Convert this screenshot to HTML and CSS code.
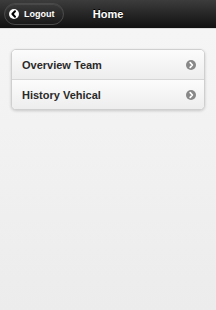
FILE: index.html
```html
<!DOCTYPE html>
<html lang="en">
<head>
    <meta charset="UTF-8">
    <meta name="viewport" content="width=device-width, initial-scale=1.0">
    <title>Home</title>
    <link rel="stylesheet" href="styles.css">
</head>
<body>
    <div class="header">
        <button class="back-button" id="logoutButton">
            <span class="back-icon">
                <svg width="10" height="10" viewBox="0 0 10 10"><path d="M6 2.2 L3.4 5 L6 7.8" fill="none" stroke="#000" stroke-width="2" stroke-linecap="round" stroke-linejoin="round"/></svg>
            </span>
            Logout
        </button>
        <h1>Home</h1>
    </div>
    <div class="content">
        <ul class="menu-list">
            <li class="menu-item">
                <span>Overview Team</span>
                <span class="arrow-icon">
                    <svg width="10" height="10" viewBox="0 0 10 10"><path d="M4.2 2.7 L6.4 5 L4.2 7.3" fill="none" stroke="#fff" stroke-width="1.7" stroke-linecap="round" stroke-linejoin="round"/></svg>
                </span>
            </li>
            <li class="menu-item">
                <span>History Vehical</span>
                <span class="arrow-icon">
                    <svg width="10" height="10" viewBox="0 0 10 10"><path d="M4.2 2.7 L6.4 5 L4.2 7.3" fill="none" stroke="#fff" stroke-width="1.7" stroke-linecap="round" stroke-linejoin="round"/></svg>
                </span>
            </li>
        </ul>
    </div>
</body>
</html>
```

FILE: styles.css
```css
html, body {
    height: 100%;
}
body {
    font-family: "Liberation Sans", Arial, sans-serif;
    background: linear-gradient(#f6f6f6, #ececec);
    margin: 0;
}
.header {
    position: relative;
    height: 28px;
    background: linear-gradient(#3c3c3c, #111111);
    border-bottom: 1px solid #dcdcdc;
    display: flex;
    align-items: center;
    justify-content: center;
}
.header h1 {
    margin: 0;
    color: #fff;
    font-size: 11px;
    font-weight: bold;
    text-shadow: 0 -1px 0 #000;
}
.back-button {
    position: absolute;
    left: 4px;
    top: 3px;
    height: 22px;
    padding: 0 8px 0 4px;
    display: flex;
    align-items: center;
    gap: 5px;
    background: linear-gradient(#3a3a3a, #1a1a1a);
    border: 1px solid #4a4a4a;
    border-radius: 11px;
    color: #fff;
    font-family: "Liberation Sans", Arial, sans-serif;
    font-size: 9px;
    font-weight: bold;
    box-shadow: inset 0 1px 0 rgba(255, 255, 255, 0.08);
}
.back-icon {
    width: 10px;
    height: 10px;
    border-radius: 50%;
    background-color: #fff;
    display: flex;
}
.content {
    padding: 20px 11px;
}
.menu-list {
    list-style-type: none;
    margin: 0;
    padding: 0;
    background: #fff;
    border: 1px solid #cfcfcf;
    border-radius: 5px;
    box-shadow: 0 1px 3px rgba(0, 0, 0, 0.18);
    overflow: hidden;
}
.menu-item {
    height: 29px;
    padding: 0 8px 0 10px;
    display: flex;
    justify-content: space-between;
    align-items: center;
    background: linear-gradient(#fcfcfc, #ededed);
    color: #2a2a2a;
    font-size: 11px;
    font-weight: bold;
}
.menu-item + .menu-item {
    border-top: 1px solid #d6d6d6;
}
.arrow-icon {
    width: 10px;
    height: 10px;
    border-radius: 50%;
    background-color: #888;
    display: flex;
}
```
